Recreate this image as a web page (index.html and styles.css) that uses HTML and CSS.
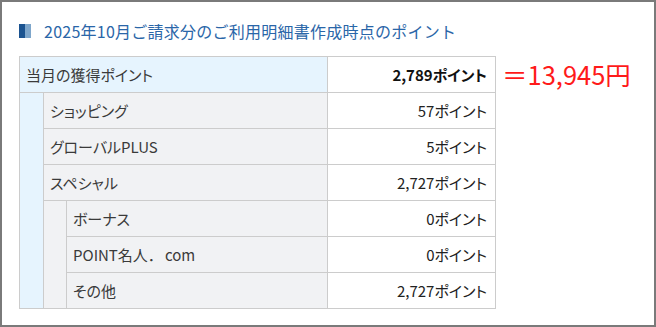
FILE: index.html
```html
<!DOCTYPE html>
<html lang="ja">
<head>
<meta charset="utf-8">
<link rel="stylesheet" href="styles.css">
</head>
<body>
<div class="box">
  <h2 class="title"><span class="mark"><span class="mark-a"></span><span class="mark-b"></span></span>2025年10月ご請求分のご利用明細書作成時点のポイント</h2>
  <div class="content">
    <table class="points">
      <colgroup>
        <col class="c1"><col class="c2"><col class="c3"><col class="c4">
      </colgroup>
      <tr class="head">
        <th colspan="3">当月の獲得ポイント</th>
        <td class="val strong">2,789ポイント</td>
      </tr>
      <tr>
        <td class="ind1" rowspan="6"></td>
        <th colspan="2">ショッピング</th>
        <td class="val">57ポイント</td>
      </tr>
      <tr>
        <th colspan="2">グローバルPLUS</th>
        <td class="val">5ポイント</td>
      </tr>
      <tr>
        <th colspan="2">スペシャル</th>
        <td class="val">2,727ポイント</td>
      </tr>
      <tr>
        <td class="ind2" rowspan="3"></td>
        <th>ボーナス</th>
        <td class="val">0ポイント</td>
      </tr>
      <tr>
        <th>POINT名人<span class="wide">．</span>com</th>
        <td class="val">0ポイント</td>
      </tr>
      <tr>
        <th>その他</th>
        <td class="val">2,727ポイント</td>
      </tr>
    </table>
    <div class="yen">＝13,945円</div>
  </div>
</div>
</body>
</html>
```
FILE: styles.css
```css
html, body {
  margin: 0;
  padding: 0;
  background: #fff;
}
body {
  font-family: "Noto Sans CJK JP", "Noto Sans", sans-serif;
  color: #333;
}
.box {
  box-sizing: border-box;
  width: 656px;
  height: 327px;
  border: 2px solid #7a7a7a;
  padding: 20px 17px 0 17px;
}
.title {
  display: flex;
  align-items: center;
  margin: 0;
  height: 18px;
  font-size: 16px;
  font-weight: normal;
  letter-spacing: 0.25px;
  color: #2a66a8;
  line-height: 18px;
}
.mark {
  display: flex;
  width: 12px;
  height: 14px;
  margin-right: 13px;
}
.mark-a {
  width: 6px;
  background: #1b5390;
}
.mark-b {
  width: 6px;
  background: #7ea6cb;
}
.content {
  display: flex;
  align-items: flex-start;
  margin-top: 16px;
  gap: 6px;
}
.points {
  border-collapse: collapse;
  width: 476px;
  table-layout: fixed;
  font-size: 15px;
  font-feature-settings: "palt";
}
.c1 { width: 24px; }
.c2 { width: 23px; }
.c3 { width: 261px; }
.c4 { width: 168px; }
.points th,
.points td {
  border: 1px solid #cccccc;
  height: 35px;
  padding: 0;
  vertical-align: middle;
}
.points th {
  text-align: left;
  font-weight: normal;
  background: #f1f2f4;
  padding-left: 6px;
  color: #3a3a3a;
}
.points .head th {
  background: #e6f4fe;
}
.wide {
  font-feature-settings: normal;
  margin-right: 2px;
}
.ind1 {
  background: #e6f4fe;
}
.ind2 {
  background: #f1f2f4;
}
.points td.val {
  text-align: right;
  padding-right: 8px;
  background: #fff;
  color: #222;
}
.points td.strong {
  font-weight: bold;
  color: #111;
}
.yen {
  color: #ff1a1a;
  font-size: 25.5px;
  line-height: 30px;
  margin-top: 3px;
  white-space: nowrap;
}
```
